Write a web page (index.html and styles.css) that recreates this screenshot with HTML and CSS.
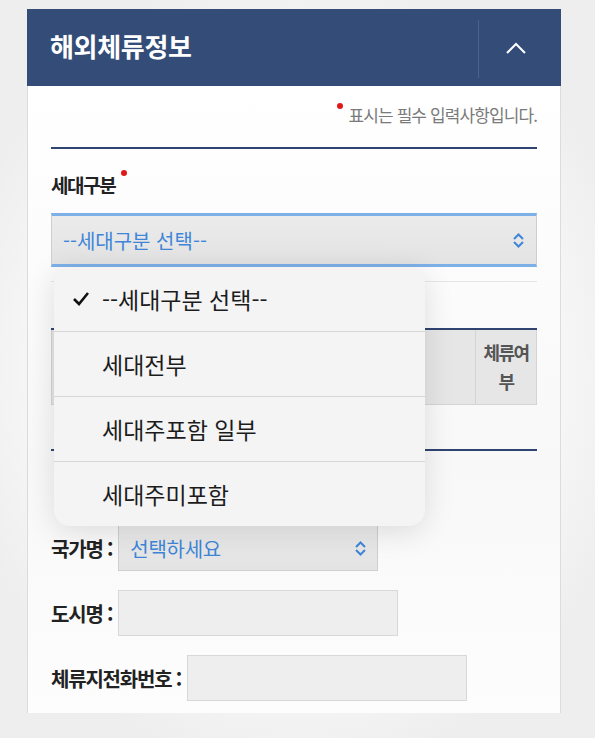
FILE: index.html
```html
<!DOCTYPE html>
<html lang="ko">
<head>
  <meta charset="UTF-8">
  <meta name="viewport" content="width=device-width, initial-scale=1.0">
  <title>해외체류정보</title>
  <link rel="stylesheet" href="styles.css">
</head>
<body>
  <div class="panel">
    <div class="panel-head">
      <h2>해외체류정보</h2>
      <button class="toggle" type="button">
        <svg width="22" height="14" viewBox="0 0 22 14"><polyline points="2,12 11,3 20,12" fill="none" stroke="#fff" stroke-width="2"/></svg>
      </button>
    </div>

    <div class="panel-body">
      <p class="note"><span class="dot"></span>표시는 필수 입력사항입니다.</p>
      <div class="line"></div>

      <!-- 세대구분 -->
      <label class="field-label">세대구분<span class="dot"></span></label>
      <div class="select focus">
        <span>--세대구분 선택--</span>
        <svg width="13" height="17" viewBox="0 0 13 17"><polyline points="2,7 6.5,2.5 11,7" fill="none" stroke="#3f86d8" stroke-width="2"/><polyline points="2,10 6.5,14.5 11,10" fill="none" stroke="#3f86d8" stroke-width="2"/></svg>
      </div>
      <div class="thin-line"></div>

      <!-- 세대원 목록 -->
      <div class="line table-top"></div>
      <div class="table-head">
        <div class="cell wide"></div>
        <div class="cell last">체류여<br>부</div>
      </div>
      <div class="line table-bottom"></div>

      <!-- 체류지 정보 -->
      <div class="row first">
        <span class="row-label hidden-label"></span>
        <div class="input"></div>
      </div>
      <div class="row">
        <span class="row-label">국가명 :</span>
        <div class="select small">
          <span>선택하세요</span>
          <svg width="13" height="17" viewBox="0 0 13 17"><polyline points="2,7 6.5,2.5 11,7" fill="none" stroke="#3f86d8" stroke-width="2"/><polyline points="2,10 6.5,14.5 11,10" fill="none" stroke="#3f86d8" stroke-width="2"/></svg>
        </div>
      </div>
      <div class="row">
        <span class="row-label">도시명 :</span>
        <div class="input"></div>
      </div>
      <div class="row">
        <span class="row-label">체류지전화번호 :</span>
        <div class="input"></div>
      </div>
    </div>
  </div>

  <!-- 선택 목록 팝업 -->
  <ul class="picker">
    <li class="checked">
      <svg class="check" width="18" height="16" viewBox="0 0 18 16"><polyline points="2,8 7,13 16,2" fill="none" stroke="#111" stroke-width="2.6"/></svg>
      --세대구분 선택--
    </li>
    <li>세대전부</li>
    <li>세대주포함 일부</li>
    <li>세대주미포함</li>
  </ul>
</body>
</html>
```

FILE: styles.css
```css
/* 기본 */
body {
  margin: 0;
  padding-top: 9px;
  height: 738px;
  box-sizing: border-box;
  font-family: "Noto Sans CJK KR", "Noto Sans", sans-serif;
  background: radial-gradient(ellipse 58% 55% at 50% 50%, #ffffff 50%, #eeeeee 100%);
  position: relative;
  overflow: hidden;
}

.panel {
  margin-left: 27px;
  width: 534px;
}

/* 헤더 */
.panel-head {
  height: 77px;
  background-color: #334d78;
  display: flex;
  align-items: stretch;
}

.panel-head h2 {
  flex: 1;
  margin: 0;
  padding-left: 23px;
  color: #ffffff;
  font-size: 26px;
  font-weight: 700;
  line-height: 74px;
  letter-spacing: -0.3px;
}

.toggle {
  width: 83px;
  border: none;
  background: none;
  display: flex;
  justify-content: center;
  align-items: center;
  position: relative;
  padding: 0 8px 0 0;
}

.toggle::before {
  content: "";
  position: absolute;
  left: 0;
  top: 11px;
  bottom: 8px;
  width: 1px;
  background-color: #4a6392;
}

/* 본문 */
.panel-body {
  height: 627px;
  box-sizing: border-box;
  border-left: 1px solid #dcdcdc;
  border-right: 1px solid #dcdcdc;
  padding: 16px 23px 0;
  background: linear-gradient(180deg, #ffffff 0%, #f8f8f8 60%, #fdfdfd 100%);
}

.note {
  margin: 0;
  text-align: right;
  font-size: 17px;
  color: #7a7a7a;
  letter-spacing: -0.9px;
  line-height: 26px;
}

.dot {
  display: inline-block;
  width: 6px;
  height: 6px;
  border-radius: 50%;
  background-color: #e01818;
  vertical-align: top;
  margin: 1px 6px 0 0;
}

.line {
  height: 2px;
  background-color: #2f4470;
  margin-top: 19px;
}

.field-label {
  display: block;
  margin-top: 23px;
  font-size: 19px;
  font-weight: 700;
  color: #222;
  letter-spacing: -1.4px;
  line-height: 26px;
}

.field-label .dot {
  margin: -2px 0 0 6px;
}

.select {
  display: flex;
  justify-content: space-between;
  align-items: center;
  box-sizing: border-box;
  background: linear-gradient(180deg, #ebebeb, #e3e3e3);
  border: 1px solid #cfcfcf;
  color: #3f86d8;
}

.select.focus {
  margin-top: 15px;
  height: 54px;
  border-top: 3px solid #7eb0e8;
  border-bottom: 3px solid #7eb0e8;
  padding: 0 11px 0 11px;
  font-size: 20px;
  letter-spacing: 0;
}

.select.small {
  width: 260px;
  height: 46px;
  padding: 0 10px 0 11px;
  font-size: 20px;
  letter-spacing: -0.3px;
}

.thin-line {
  height: 1px;
  background-color: #e6e6e6;
  margin-top: 14px;
}

.table-top {
  margin-top: 46px;
}

.table-head {
  display: flex;
  height: 74px;
  background-color: #e6e6e6;
  border-left: 1px solid #d4d4d4;
  border-bottom: 1px solid #d4d4d4;
  border-right: 1px solid #d4d4d4;
}

.cell.wide {
  flex: 1;
}

.cell.last {
  width: 60px;
  border-left: 1px solid #d4d4d4;
  text-align: center;
  font-size: 18px;
  font-weight: 700;
  color: #555;
  line-height: 29px;
  padding-top: 8px;
  letter-spacing: -1.6px;
}

.table-bottom {
  margin-top: 44px;
}

/* 입력 행 */
.row {
  display: flex;
  align-items: center;
  margin-top: 19px;
}

.row.first {
  margin-top: 9px;
}

.row-label {
  font-size: 20px;
  font-weight: 700;
  color: #222;
  letter-spacing: -1.2px;
  margin-right: 6px;
  white-space: nowrap;
}

.hidden-label {
  width: 63px;
}

.input {
  width: 280px;
  height: 46px;
  box-sizing: border-box;
  background-color: #eeeeee;
  border: 1px solid #d8d8d8;
}

/* 팝업 목록 */
.picker {
  position: absolute;
  left: 54px;
  top: 267px;
  width: 371px;
  margin: 0;
  padding: 0;
  list-style: none;
  background-color: #f4f4f5;
  border-radius: 16px;
  box-shadow: 0 6px 30px rgba(0, 0, 0, 0.12);
  overflow: hidden;
}

.picker li {
  height: 64px;
  box-sizing: border-box;
  display: flex;
  align-items: center;
  padding-left: 48px;
  font-size: 23px;
  color: #1c1c1c;
  border-top: 1px solid #d6d6d6;
  position: relative;
}

.picker li:first-child {
  border-top: none;
}

.picker li + li {
  height: 65px;
}

.check {
  position: absolute;
  left: 18px;
  top: 24px;
}
```
